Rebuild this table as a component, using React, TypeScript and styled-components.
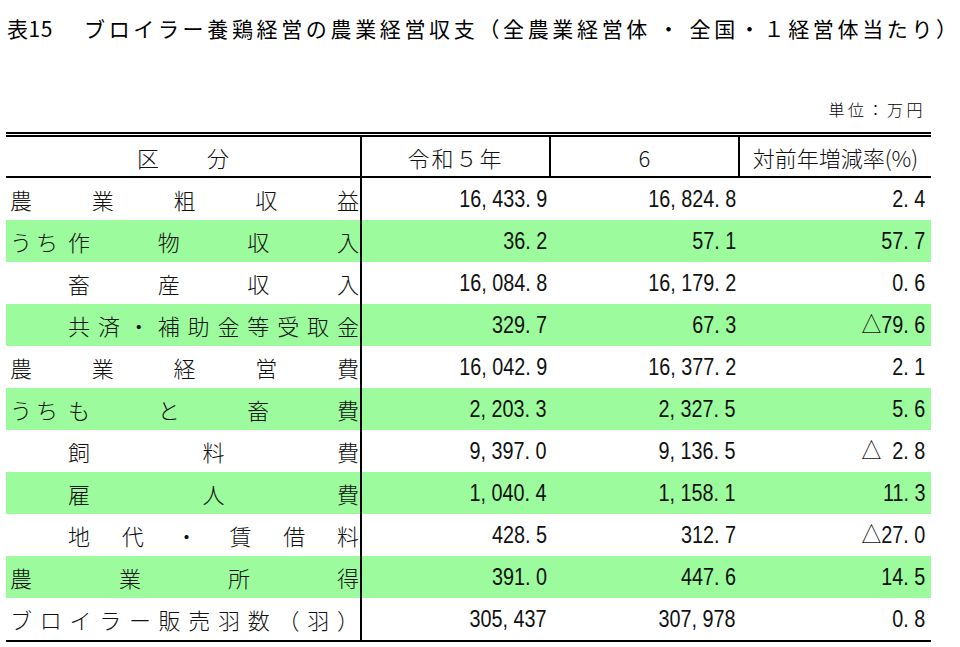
import React from "react";
import styled, { createGlobalStyle } from "styled-components";

const GlobalStyle = createGlobalStyle`
  html, body { margin: 0; padding: 0; background: #ffffff; }
  body { font-family: "Noto Sans CJK JP", sans-serif; color: #000; }
`;

const Page = styled.div`
  width: 960px;
  height: 647px;
  overflow: hidden;
`;

const Title = styled.h1`
  margin: 0;
  padding: 16px 0 0 7px;
  display: flex;
  align-items: center;
  height: 24px;
  line-height: 24px;
  font-family: "Noto Sans CJK JP", sans-serif;
  font-weight: 400;
  font-size: 21px;
  white-space: nowrap;
`;

const TitleNo = styled.span`
  flex: none;
  width: 77px;
  letter-spacing: 0.5px;
`;

const TitleText = styled.span`
  letter-spacing: 3.65px;
`;

const TitleGap = styled.span<{ $w: number }>`
  display: inline-block;
  width: ${(p) => p.$w}px;
`;

const TitleEnd = styled.span`
  letter-spacing: 0;
`;

const Unit = styled.div`
  display: flex;
  justify-content: flex-end;
  margin-top: 58px;
  padding-right: 34px;
  height: 22px;
  line-height: 22px;
  font-size: 16px;
  font-weight: 300;
  letter-spacing: 3.5px;
`;

const Table = styled.div`
  margin: 12px 0 0 6px;
  width: 925px;
  border-top: 5px double #000;
  border-bottom: 2px solid #000;
`;

const Row = styled.div<{ $green?: boolean; $head?: boolean }>`
  display: grid;
  grid-template-columns: 356px 189px 189px 191px;
  box-sizing: border-box;
  height: ${(p) => (p.$head ? 41 : 42)}px;
  background: ${(p) => (p.$green ? "#9cfb9c" : "transparent")};
  border-bottom: ${(p) => (p.$head ? "2px solid #000" : "none")};
`;

const HeadCell = styled.div<{ $line?: boolean; $gap?: number; $ls?: number }>`
  box-sizing: border-box;
  display: flex;
  align-items: center;
  justify-content: center;
  gap: ${(p) => p.$gap ?? 0}px;
  border-right: ${(p) => (p.$line ? "2px solid #000" : "none")};
  font-size: 22px;
  font-weight: 300;
  letter-spacing: ${(p) => p.$ls ?? 0}px;
  color: #111;
  white-space: nowrap;
`;

const LabelCell = styled.div`
  box-sizing: border-box;
  display: flex;
  align-items: center;
  padding: 0 1px 0 4px;
  border-right: 2px solid #000;
  font-size: 22px;
  font-weight: 300;
  color: #111;
  white-space: nowrap;
`;

const Prefix = styled.span`
  flex: none;
  width: 58px;
  letter-spacing: 4px;
`;

const Spread = styled.span`
  flex: 1;
  display: flex;
  justify-content: space-between;
`;

const NumCell = styled.div<{ $pr: number }>`
  box-sizing: border-box;
  display: flex;
  align-items: center;
  justify-content: flex-end;
  padding-right: ${(p) => p.$pr}px;
`;

const NumText = styled.span`
  display: inline-block;
  font-family: "Liberation Sans", "Noto Sans CJK JP", sans-serif;
  font-size: 23px;
  line-height: 1;
  white-space: pre;
  transform: scaleX(0.86);
  transform-origin: right center;
  color: #111;
`;

const Ghost = styled.span`
  visibility: hidden;
`;

type RowData = {
  label: string;
  prefix?: string;
  indent?: boolean;
  green?: boolean;
  v: [string, string, string];
};

const rows: RowData[] = [
  { label: "農業粗収益", v: ["16,433.9", "16,824.8", "2.4"] },
  { label: "作物収入", prefix: "うち", green: true, v: ["36.2", "57.1", "57.7"] },
  { label: "畜産収入", indent: true, v: ["16,084.8", "16,179.2", "0.6"] },
  { label: "共済・補助金等受取金", indent: true, green: true, v: ["329.7", "67.3", "△79.6"] },
  { label: "農業経営費", v: ["16,042.9", "16,377.2", "2.1"] },
  { label: "もと畜費", prefix: "うち", green: true, v: ["2,203.3", "2,327.5", "5.6"] },
  { label: "飼料費", indent: true, v: ["9,397.0", "9,136.5", "△_2.8"] },
  { label: "雇人費", indent: true, green: true, v: ["1,040.4", "1,158.1", "11.3"] },
  { label: "地代・賃借料", indent: true, v: ["428.5", "312.7", "△27.0"] },
  { label: "農業所得", green: true, v: ["391.0", "447.6", "14.5"] },
  { label: "ブロイラー販売羽数（羽）", v: ["305,437", "307,978", "0.8"] },
];

const Num: React.FC<{ value: string }> = ({ value }) => {
  const parts = value.split("_");
  const fmt = (s: string) => s.replace(/([,.])/g, "$1 ");
  if (parts.length === 2) {
    return (
      <NumText>
        {parts[0]}
        <Ghost>0</Ghost>
        {fmt(parts[1])}
      </NumText>
    );
  }
  return <NumText>{fmt(value)}</NumText>;
};

export default function App() {
  return (
    <Page>
      <GlobalStyle />
      <Title>
        <TitleNo>表15</TitleNo>
        <TitleText>
          ブロイラー養鶏経営の農業経営収支（全農業経営体
          <TitleGap $w={7} />・<TitleGap $w={7} />
          全国・１経営体当たり<TitleEnd>）</TitleEnd>
        </TitleText>
      </Title>
      <Unit>単位：万円</Unit>
      <Table>
        <Row $head>
          <HeadCell $line $gap={48}>
            <span>区</span>
            <span>分</span>
          </HeadCell>
          <HeadCell $line $ls={2}>令和５年</HeadCell>
          <HeadCell $line>6</HeadCell>
          <HeadCell>対前年増減率(%)</HeadCell>
        </Row>
        {rows.map((r) => (
          <Row key={r.label} $green={r.green}>
            <LabelCell>
              {(r.prefix || r.indent) && <Prefix>{r.prefix ?? ""}</Prefix>}
              <Spread>
                {Array.from(r.label).map((c, i) => (
                  <span key={i}>{c}</span>
                ))}
              </Spread>
            </LabelCell>
            <NumCell $pr={4}>
              <Num value={r.v[0]} />
            </NumCell>
            <NumCell $pr={4}>
              <Num value={r.v[1]} />
            </NumCell>
            <NumCell $pr={6}>
              <Num value={r.v[2]} />
            </NumCell>
          </Row>
        ))}
      </Table>
    </Page>
  );
}
